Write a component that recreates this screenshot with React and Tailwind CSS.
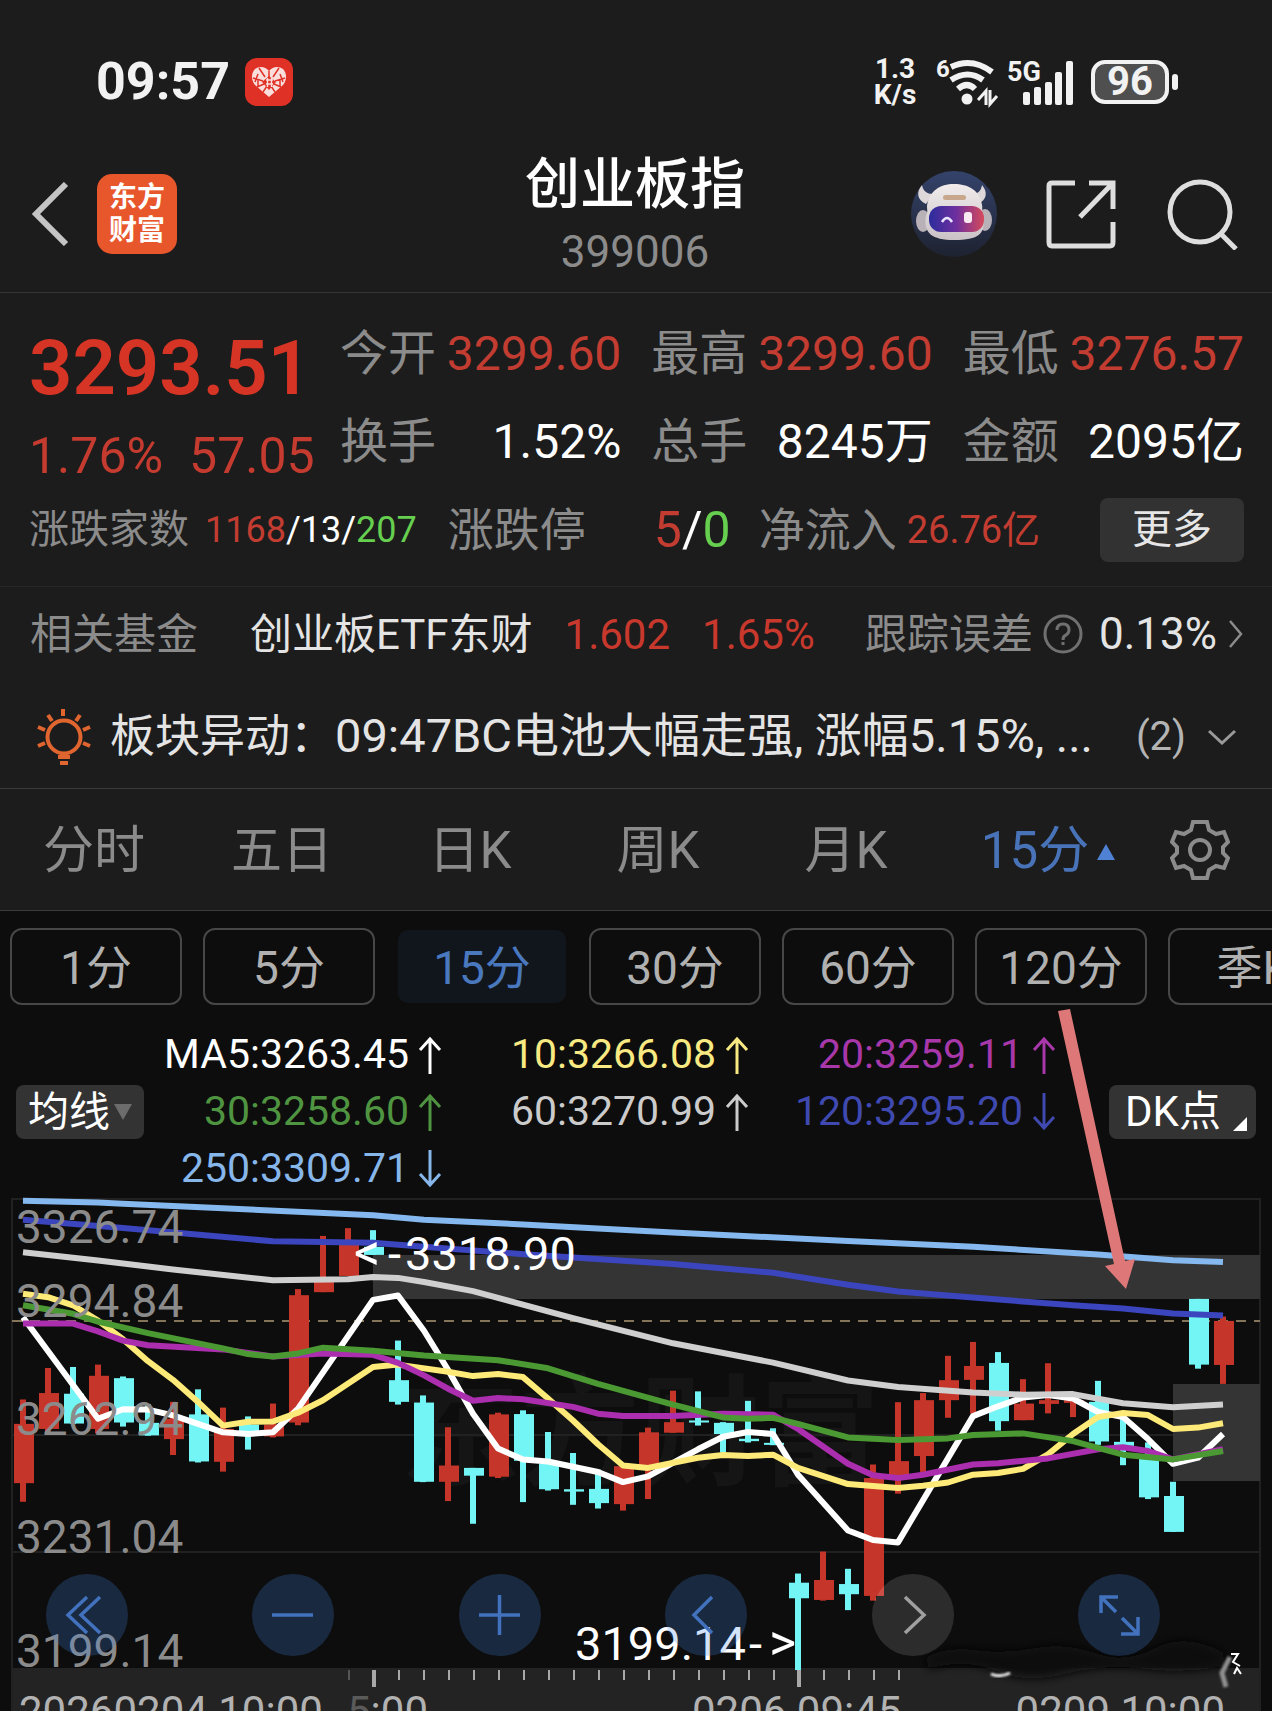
import React from "react";

const UP = "#c63529";
const DOWN = "#74f5f5";

/* [high, bodyTop, bodyBottom, low, colour] in plot levels, left to right */
const CANDLES = [
  [648, 720, 895, 950, UP], [555, 629, 735, 752, UP], [552, 631, 719, 720, DOWN], [545, 578, 735, 748, UP],
  [580, 585, 716, 728, DOWN], [662, 717, 754, 755, DOWN], [655, 705, 765, 812, UP], [618, 692, 831, 834, DOWN],
  [672, 735, 832, 861, UP], [698, 722, 745, 796, DOWN], [660, 722, 757, 760, UP], [322, 340, 716, 724, UP],
  [165, 300, 331, 331, UP], [142, 190, 283, 283, UP], [148, 197, 221, 221, DOWN], [474, 591, 655, 663, DOWN],
  [636, 657, 891, 892, DOWN], [730, 843, 891, 948, UP], [850, 850, 873, 1015, DOWN], [687, 692, 876, 880, UP],
  [680, 691, 829, 951, DOWN], [744, 838, 913, 917, DOWN], [806, 913, 920, 959, DOWN], [855, 912, 954, 970, DOWN],
  [845, 845, 957, 976, UP], [731, 745, 850, 942, UP], [622, 715, 746, 746, UP], [624, 710, 716, 725, DOWN],
  [715, 717, 750, 805, DOWN], [652, 764, 771, 775, DOWN], [733, 776, 782, 783, DOWN], [1162, 1189, 1235, 1447, DOWN],
  [1097, 1181, 1240, 1242, UP], [1148, 1193, 1223, 1270, DOWN], [840, 880, 1228, 1242, UP], [656, 830, 880, 926, UP],
  [629, 650, 815, 862, UP], [519, 591, 650, 702, UP], [478, 549, 590, 690, UP], [508, 540, 712, 740, DOWN],
  [588, 660, 709, 709, UP], [541, 650, 661, 689, UP], [650, 650, 658, 700, UP], [593, 655, 772, 782, DOWN],
  [700, 773, 785, 842, DOWN], [775, 815, 937, 942, DOWN], [891, 933, 1039, 1039, DOWN], [351, 351, 545, 557, DOWN],
  [403, 416, 546, 602, UP],
];

const LINES = [
  ["#85b8ee", [23,61,98,66,123,70,223,83,373,104,424,117,523,131,673,155,848,180,973,197,1098,220,1173,237,1223,242]],
  ["#3b45bd", [23,117,123,142,273,181,373,185,424,197,524,219,673,248,773,274,848,309,898,329,973,347,1073,370,1123,379,1173,394,1223,400]],
  ["#ffffff", [23,405,98,705,123,677,148,678,173,695,223,745,248,750,273,745,298,675,373,354,398,341,424,445,448,560,473,690,498,793,523,825,548,831,598,862,623,892,648,875,698,795,723,758,748,744,773,750,798,870,848,1035,873,1063,898,1070,973,697,998,668,1023,642,1048,635,1073,645,1098,685,1123,700,1148,765,1173,838,1198,820,1223,750]],
  ["#cfcfcf", [23,213,98,238,173,264,273,296,348,293,373,286,398,289,424,301,473,328,573,408,673,482,773,539,848,592,898,611,973,627,1023,634,1073,632,1123,659,1173,671,1223,663]],
  ["#fdea78", [23,336,48,346,73,370,98,415,123,470,148,535,173,590,198,655,223,725,248,714,273,713,298,687,323,650,373,552,398,545,448,566,473,579,498,573,523,582,548,645,573,710,598,780,623,843,648,850,698,820,723,812,748,815,773,811,798,850,848,898,898,909,923,903,948,893,973,870,998,865,1023,853,1048,810,1073,750,1098,700,1123,688,1148,694,1173,735,1198,731,1223,718]],
  ["#ab2eae", [23,424,73,424,98,447,123,474,148,488,223,500,273,521,323,512,373,516,398,540,424,577,448,616,473,652,498,644,523,647,573,670,598,690,623,697,673,697,723,690,773,693,798,735,848,838,873,872,898,880,923,870,973,840,998,836,1048,822,1098,795,1123,789,1148,800,1173,825,1223,795]],
  ["#4b9933", [23,370,73,395,98,418,148,452,223,497,248,514,273,521,298,512,323,495,373,504,424,518,498,532,548,556,598,602,673,663,723,701,748,705,773,702,798,720,848,760,898,768,948,763,973,753,1023,748,1073,771,1123,811,1173,825,1223,800]],
];

const toY = (level) => (level - 53) / 2.953;

const toPoints = (flat) => {
  const out = [];
  for (let i = 0; i < flat.length; i += 2) out.push(`${flat[i]},${toY(flat[i + 1]).toFixed(1)}`);
  return out.join(" ");
};

const TICKS = [399,424,449,474,499,524,549,574,599,624,649,674,699,724,749,774,824,849,874,899];

const CHART_FONT = 'Roboto, "Noto Sans CJK SC", sans-serif';

function StatusBar() {
  return (
    <div className="flex h-[150px] items-center pt-[14px] pl-24 pr-[94px] text-[#f2f2f2]">
      <span className="text-[52px] leading-[60px] font-bold">09:57</span>
      <svg className="ml-[15px] size-12" viewBox="0 0 48 48" aria-hidden="true">
        <rect width="48" height="48" rx="12" fill="#e03127" />
        <path d="M24 39 10 27c-4-5-4-12 0-16 4-3 10-3 14 2 4-5 10-5 14-2 4 4 4 11 0 16Z" fill="#f9dedb" />
        <path d="M24 13v7M8 20l10 3M40 20l-10 3M14 10l6 9M34 10l-6 9M12 29l7-3M36 29l-7-3M18 34l4-6M30 34l-4-6M13 16l-3 8M35 16l3 8M13 22v6M35 22v6" stroke="#e03127" strokeWidth="1.5" fill="none" />
        <path d="m24 18 7 6-7 8-7-8Z" fill="#e03127" />
        <path d="M21 22h7M21 26h7M22.500 20v9M26.500 20v9" stroke="#f9dedb" strokeWidth="1.400" />
      </svg>
      <div className="ml-auto flex items-center">
        <div className="w-12 text-center text-[28px] leading-[26px] font-bold">
          <div>1.3</div>
          <div>K/s</div>
        </div>
        <svg className="ml-[17px] h-12 w-[62px] overflow-visible" viewBox="0 0 62 48" fill="none" aria-label="Wi-Fi 6">
          <text x="0" y="19" fontFamily={CHART_FONT} fontSize="24" fontWeight="700" fill="#f2f2f2">6</text>
          <path d="M15 9q21-10 41 5M15 22q17-11 32 0M22 31q9-8 17 0" stroke="#f2f2f2" strokeWidth="6" />
          <circle cx="31" cy="41" r="5.500" fill="#f2f2f2" />
          <path d="M50 47V33l-8 9M54 32v14l7-8" stroke="#f2f2f2" strokeWidth="3" />
        </svg>
        <svg className="ml-[9px] h-12 w-[68px] overflow-visible" viewBox="0 0 68 48" aria-label="5G">
          <text x="0" y="23" fontFamily={CHART_FONT} fontSize="27" fontWeight="700" fill="#f2f2f2">5G</text>
          <g fill="#f2f2f2">
            <rect x="16" y="34" width="7" height="13" rx="2" />
            <rect x="27" y="29" width="7" height="18" rx="2" />
            <rect x="38" y="24" width="7" height="23" rx="2" />
            <rect x="48" y="14" width="7" height="33" rx="2" />
            <rect x="59" y="3" width="7" height="44" rx="2" />
          </g>
        </svg>
        <div className="ml-4 flex h-11 w-[78px] items-center justify-center rounded-[14px] border-4 border-[#f2f2f2] bg-[#4f4f4f] text-[40px] leading-9 font-bold">96</div>
        <div className="ml-[3px] h-4 w-[6px] rounded-full bg-[#f2f2f2]" />
      </div>
    </div>
  );
}

function Robot() {
  return (
    <svg className="size-[88px]" viewBox="0 0 88 88" aria-hidden="true">
      <defs>
        <linearGradient id="visor" x1="0" x2="1">
          <stop offset="0" stopColor="#2c2c9c" />
          <stop offset="0.500" stopColor="#6f2f9e" />
          <stop offset="1" stopColor="#d64a5c" />
        </linearGradient>
        <linearGradient id="disc" x1="0" y1="0" x2="0" y2="1">
          <stop offset="0" stopColor="#34436b" />
          <stop offset="1" stopColor="#1e2230" />
        </linearGradient>
        <linearGradient id="shell" x1="0" y1="0" x2="0" y2="1">
          <stop offset="0" stopColor="#f1ecec" />
          <stop offset="1" stopColor="#c9c1c6" />
        </linearGradient>
      </defs>
      <circle cx="44" cy="44" r="43" fill="url(#disc)" />
      <path d="M12 15c-6 7-5 15 4 19l7-10c-6 0-10-3-11-9ZM72 15c6 7 5 15-4 19l-6-10c6 0 9-3 10-9Z" fill="#ddd7da" />
      <ellipse cx="13" cy="51" rx="7" ry="11" fill="#b9b1b8" />
      <ellipse cx="75" cy="50" rx="7" ry="11" fill="#b9b1b8" />
      <path d="M17 36c2-15 13-22 27-22s26 6 28 21c1 4-1 6 1 11 3 18-4 24-29 24-22 0-31-7-28-24 2-4 1-6 1-10Z" fill="url(#shell)" />
      <rect x="33" y="25" width="23" height="5" rx="2.500" fill="#c9a78c" />
      <rect x="19" y="36" width="55" height="26" rx="12" fill="url(#visor)" />
      <path d="M32 52q5-8 10 0" fill="none" stroke="#e9e3ff" strokeWidth="2.500" />
      <rect x="54" y="42" width="8" height="11" rx="3" fill="#fbe9f2" />
    </svg>
  );
}

function Header() {
  return (
    <header className="grid h-[143px] grid-cols-[1fr_auto_1fr] items-center border-b border-[#333] pr-[34px] pb-[14px] pl-8">
      <div className="flex items-center gap-7">
        <button type="button" aria-label="返回">
          <svg className="h-16 w-[37px]" viewBox="0 0 37 64" fill="none" stroke="#c4c4c4" strokeWidth="6">
            <path d="M34 2 4 32l30 30" />
          </svg>
        </button>
        <a href="#home" className="flex size-20 flex-col items-center justify-center rounded-[15px] bg-[#e8562b] text-[28px] leading-[33px] font-bold text-white">
          <span>东方</span>
          <span>财富</span>
        </a>
      </div>
      <div className="flex flex-col items-center gap-3">
        <h1 className="text-[55px] leading-[64px] font-medium text-white">创业板指</h1>
        <div className="text-[44px] leading-[48px] text-[#8b8b8b]">399006</div>
      </div>
      <div className="flex items-center justify-end">
        <button type="button" aria-label="智能助手"><Robot /></button>
        <button type="button" aria-label="分享" className="ml-12">
          <svg className="size-[70px]" viewBox="0 0 70 70" fill="none" stroke="#dedede" strokeWidth="5">
            <path d="M29 4H6q-3 0-3 3v56q0 4 3 4h58q3 0 3-4V43M43 4h24v26M66 5 34 38" />
          </svg>
        </button>
        <button type="button" aria-label="搜索" className="ml-[51px]">
          <svg className="size-[71px]" viewBox="0 0 71 71" fill="none" stroke="#dedede" strokeWidth="5">
            <circle cx="33" cy="33" r="30" />
            <path d="m54 55 15 15" />
          </svg>
        </button>
      </div>
    </header>
  );
}

function Stat({ label, value, red }) {
  return (
    <div className="flex h-[88px] items-center justify-between">
      <dt className="text-[#8b8b8b]">{label}</dt>
      <dd className={red ? "text-[#c23c31]" : "text-white"}>{value}</dd>
    </div>
  );
}

function Quote() {
  return (
    <section className="border-b border-[#282828] pt-[17px] pr-7 pb-3 pl-[29px] whitespace-nowrap">
      <div className="flex">
        <div className="w-[311px] shrink-0">
          <div className="flex h-[116px] items-center text-[76px] font-semibold text-[#d63425]">3293.51</div>
          <div className="flex h-[60px] items-center gap-[26px] text-[50px] text-[#c63b2f]">
            <span>1.76%</span>
            <span>57.05</span>
          </div>
        </div>
        <dl className="grid flex-1 grid-cols-3 gap-x-[30px] text-[48px] leading-[60px]">
          <Stat label="今开" value="3299.60" red />
          <Stat label="最高" value="3299.60" red />
          <Stat label="最低" value="3276.57" red />
          <Stat label="换手" value="1.52%" />
          <Stat label="总手" value="8245万" />
          <Stat label="金额" value="2095亿" />
        </dl>
      </div>
      <div className="flex h-[88px] items-center text-[#8b8b8b]">
        <span className="text-[40px]">涨跌家数</span>
        <span className="ml-4 text-[36px] text-white">
          <span className="text-[#c23c31]">1168</span>/13/<span className="text-[#66cf50]">207</span>
        </span>
        <span className="ml-[31px] text-[46px]">涨跌停</span>
        <span className="ml-[68px] text-[50px] text-white">
          <span className="text-[#c23c31]">5</span>/<span className="text-[#66cf50]">0</span>
        </span>
        <span className="ml-7 text-[46px]">净流入</span>
        <span className="ml-[10px] text-[38px] text-[#c23c31]">26.76亿</span>
        <button type="button" className="ml-auto h-16 w-36 rounded-lg bg-[#323232] text-[40px] leading-[60px] text-[#e6e6e6]">更多</button>
      </div>
    </section>
  );
}

function FundRow() {
  return (
    <a href="#fund" className="flex h-[90px] items-center pt-1 pr-[29px] pl-[30px] text-[42px] whitespace-nowrap text-[#8b8b8b]">
      <span>相关基金</span>
      <span className="ml-[52px] text-[#e4e4e4]">创业板ETF东财</span>
      <span className="ml-8 text-[#c8382c]">1.602</span>
      <span className="ml-8 text-[#c8382c]">1.65%</span>
      <span className="ml-auto">跟踪误差</span>
      <svg className="ml-[10px] size-10" viewBox="0 0 40 40" fill="none" stroke="#707070" strokeWidth="3" aria-hidden="true">
        <circle cx="20" cy="20" r="18" />
        <path d="M14 16q0-6 6-6t6 6q0 3-3 5-3 1-3 5M20 28v3" />
      </svg>
      <span className="ml-4 text-[44px] text-[#e4e4e4]">0.13%</span>
      <svg className="ml-3 h-7 w-[14px]" viewBox="0 0 14 28" fill="none" stroke="#8b8b8b" strokeWidth="2.500" aria-hidden="true">
        <path d="m1 1 11 13L1 27" />
      </svg>
    </a>
  );
}

function AlertRow() {
  return (
    <button type="button" className="flex h-[112px] w-full items-center border-b border-[#3a3a3a] pt-2 pr-9 pl-9 text-left text-[45px] whitespace-nowrap text-[#e4e4e4]">
      <svg className="h-14 w-[56px]" viewBox="0 0 56 56" fill="none" stroke="#e0652f" strokeWidth="4" aria-hidden="true">
        <circle cx="28" cy="28" r="16.500" />
        <path d="M27 0v7M12 6l4 6M44 6l-4 6M2 18l7 3M54 18l-7 3M2 37l7-3M54 37l-7-3M22 48h12M24 54h8" />
      </svg>
      <span className="ml-[18px]">板块异动：</span>
      <span className="text-[47px]">09:47BC电池大幅走强, 涨幅5.15%, ...</span>
      <span className="ml-auto text-[40px] text-[#b4b4b4]">(2)</span>
      <svg className="ml-[22px] h-4 w-7" viewBox="0 0 28 16" fill="none" stroke="#9a9a9a" strokeWidth="3" aria-hidden="true">
        <path d="m1 2 13 12L27 2" />
      </svg>
    </button>
  );
}

function Tabs() {
  return (
    <nav className="flex h-[122px] items-center border-b border-[#3a3a3a] text-[51px] whitespace-nowrap text-[#8b8b8b]">
      {["分时", "五日", "日K", "周K", "月K"].map((t) => (
        <button type="button" key={t} className="flex-1 pt-1">{t}</button>
      ))}
      <button type="button" className="flex flex-1 items-center justify-center gap-2 pt-1 text-[#4873b8]">
        <span className="ml-7">15分</span>
        <svg className="h-4 w-[18px]" viewBox="0 0 18 16" fill="#4f82d4" aria-hidden="true"><path d="m9 0 9 16H0Z" /></svg>
      </button>
      <button type="button" aria-label="设置" className="flex w-36 justify-center">
        <svg className="size-[60px]" viewBox="0 0 60 60" fill="none" stroke="#8b8b8b" strokeWidth="4" aria-hidden="true">
          <path d="M23 2h14l2 8 7 4 8-2 4 10-5 5v6l5 5-4 10-8-2-7 4-2 8H23l-2-8-7-4-8 2-4-10 5-5v-6l-5-5 4-10 8 2 7-4Z" />
          <circle cx="30" cy="30" r="10" />
        </svg>
      </button>
    </nav>
  );
}

function Periods() {
  return (
    <div className="flex gap-[21px] overflow-hidden pt-[17px] pl-[10px] text-[46px] whitespace-nowrap text-[#b0b0b0]">
      {["1分", "5分", "15分", "30分", "60分", "120分", "季K"].map((t) =>
        t === "15分" ? (
          <button type="button" key={t} aria-pressed="true" className="h-[77px] w-[172px] shrink-0 rounded-xl border-2 border-[#0d0d0d] bg-[#11161d] pt-1 text-[#4a78be]">{t}</button>
        ) : (
          <button type="button" key={t} className="h-[77px] w-[172px] shrink-0 rounded-xl border-2 border-[#474747] pt-1">{t}</button>
        )
      )}
    </div>
  );
}

function Average({ text, up, tone }) {
  return (
    <div className={`flex h-[57px] items-center justify-end gap-[9px] ${tone}`}>
      <span>{text}</span>
      <svg className="h-[38px] w-6" viewBox="0 0 24 38" fill="none" stroke="currentColor" strokeWidth="3" aria-label={up ? "升" : "降"}>
        <path d={up ? "M12 38V3M2 14 12 3l10 11" : "M12 0v35M2 24l10 11 10-11"} />
      </svg>
    </div>
  );
}

function Averages() {
  return (
    <div className="flex items-center px-4 pt-[21px] whitespace-nowrap">
      <button type="button" className="flex h-[54px] w-32 items-center justify-center gap-1 rounded-lg bg-[#333] text-[41px] leading-[50px] text-white">
        均线
        <svg className="h-4 w-[18px]" viewBox="0 0 18 16" fill="#6c6c6c" aria-hidden="true"><path d="M0 0h18L9 16Z" /></svg>
      </button>
      <div className="grid flex-1 grid-cols-[298fr_307fr_307fr] text-[41px]">
        <Average text="MA5:3263.45" up tone="text-white" />
        <Average text="10:3266.08" up tone="text-[#f8e982]" />
        <Average text="20:3259.11" up tone="text-[#a838aa]" />
        <Average text="30:3258.60" up tone="text-[#4f9440]" />
        <Average text="60:3270.99" up tone="text-[#cbcbcb]" />
        <Average text="120:3295.20" tone="text-[#3f49b0]" />
        <Average text="250:3309.71" tone="text-[#86b6ea]" />
      </div>
      <button type="button" className="ml-[53px] flex h-[54px] w-[147px] items-center gap-3 rounded-lg bg-[#333] pl-4 text-[42px] leading-[50px] text-white">
        DK点
        <svg className="mt-6 size-[14px]" viewBox="0 0 14 14" fill="#fff" aria-hidden="true"><path d="M14 0v14H0Z" /></svg>
      </button>
    </div>
  );
}

const CONTROLS = [
  ["快速后退", "M41 23 22 41l19 18M54 23 35 41l19 18"],
  ["缩小", "M20 41h41"],
  ["放大", "M20 41h41M40.500 21v40"],
  ["后退", "M47 23 29 41l18 18"],
  ["前进", "M33 23l19 18-19 18"],
  ["全屏", "M23 39V23h17M23 23l15 15M60 43v17H43M60 60 44 44"],
];

function Chart() {
  return (
    <div className="relative mt-px">
      <svg className="block h-auto w-full overflow-visible" viewBox="0 0 1272 540" fontFamily={CHART_FONT} role="img" aria-label="创业板指 15分钟K线图">
        <defs>
          <filter id="smudge" x="-10%" y="-60%" width="120%" height="220%"><feGaussianBlur stdDeviation="5" /></filter>
          <filter id="soft" x="-50%" y="-50%" width="200%" height="200%"><feGaussianBlur stdDeviation="1" /></filter>
        </defs>
        <text x="400" y="278" fontSize="120" fontWeight="700" fill="#151515">东方财富</text>
        <rect x="12" y="470" width="1248" height="70" fill="#232323" />
        <path d="M12 540V1h1248v539M12 237h1248M12 354h1248" fill="none" stroke="#212121" strokeWidth="2" />
        <rect x="373" y="57" width="887" height="44" fill="#343434" />
        <rect x="1173" y="186" width="87" height="97" fill="#343434" />
        <path d="M12 123h1248" stroke="#857558" strokeWidth="2" strokeDasharray="10 8" />
        {CANDLES.map(([hi, top, bottom, lo, colour], i) => (
          <g key={i} fill={colour}>
            <rect x={20 + i * 25} y={toY(hi)} width="6" height={toY(lo) - toY(hi)} />
            <rect x={14 + i * 25} y={toY(top)} width="20" height={toY(bottom) - toY(top)} />
          </g>
        ))}
        {LINES.map(([colour, flat]) => (
          <polyline key={colour} points={toPoints(flat)} fill="none" stroke={colour} strokeWidth="6" strokeLinejoin="round" />
        ))}
        <g fontSize="46" fill="#8b8b8b">
          <text x="16" y="45">3326.74</text>
          <text x="16" y="119">3294.84</text>
          <text x="16" y="237">3262.94</text>
          <text x="16" y="355">3231.04</text>
          <text x="16" y="469">3199.14</text>
        </g>
        <g fontSize="47" fill="#fff">
          <text x="354" y="72"><tspan fontSize="52">&lt;</tspan><tspan x="388">-</tspan><tspan x="405">3318.90</tspan></text>
          <text x="575" y="462">3199.14<tspan x="749">-</tspan><tspan x="769" fontSize="52">&gt;</tspan></text>
        </g>
        <g stroke="#a8a8a8" strokeWidth="2">
          {TICKS.map((x) => <path key={x} d={`M${x} 472v10`} />)}
          <path d="M349 472v10" stroke="#555" />
          <path d="M374 472v17M799 472v17" strokeWidth="4" />
        </g>
        <path d="M925 460q20-12 50-8t60-2 60 5 60-5 68 4l2 14q-40 8-80 3t-80 5-70-3-66-2Z" fill="#0a0a0a" filter="url(#smudge)" />
        <path d="M991 476q9 4 19-1" stroke="#f4f4f4" strokeWidth="3" fill="none" filter="url(#soft)" />
        <path d="M1230 459l-8 16 4 14" stroke="#8f8f8f" strokeWidth="5" fill="none" filter="url(#soft)" />
        <path d="M1231 456h7l-5 8 7 4M1234 476l3-6 4 6" stroke="#fff" strokeWidth="2" fill="none" />
        <g fontSize="42" fill="#b2b2b2">
          <text x="19" y="528">20260204 10:00</text>
          <text x="347" y="528"><tspan fill="#5a5a5a">5</tspan>:00</text>
          <text x="692" y="528">0206 09:45</text>
          <text x="1225" y="528" textAnchor="end">0209 10:00</text>
        </g>
        <path d="M1058-187 1070-189 1125 63 1135 61 1126 91 1105 68 1114 66Z" fill="#de7878" />
      </svg>
      <div className="absolute inset-x-0 top-[376px] flex justify-between pr-28 pl-[46px]">
        {CONTROLS.map(([name, d]) => (
          <button
            type="button"
            key={name}
            aria-label={name}
            className={name === "前进" ? "size-[82px] rounded-full bg-white/13 text-[#a0a0a0]" : "size-[82px] rounded-full bg-[#4384e6]/24 text-[#4272bd]"}
          >
            <svg className="size-[82px]" viewBox="0 0 82 82" fill="none" stroke="currentColor" strokeWidth="3.500"><path d={d} /></svg>
          </button>
        ))}
      </div>
    </div>
  );
}

export default function App() {
  return (
    <main className="h-screen w-full overflow-hidden bg-[#1c1c1c] font-[Roboto,'Noto_Sans_CJK_SC',sans-serif]" lang="zh-CN">
      <StatusBar />
      <Header />
      <Quote />
      <FundRow />
      <AlertRow />
      <Tabs />
      <section className="bg-[#0d0d0d]">
        <Periods />
        <Averages />
        <Chart />
      </section>
    </main>
  );
}
